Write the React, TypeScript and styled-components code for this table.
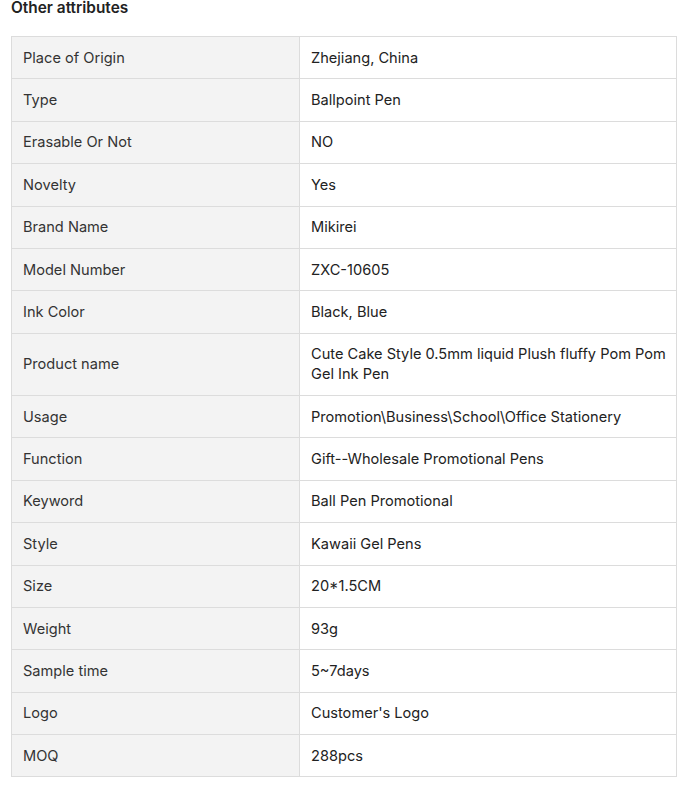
import React from "react";
import styled, { createGlobalStyle } from "styled-components";

const Global = createGlobalStyle`
  html, body { margin: 0; padding: 0; background: #ffffff; }
  body { font-family: Inter, "Noto Sans", Arial, sans-serif; }
`;

const Page = styled.div`
  padding: 0 8px 0 11px;
  width: 666px;
`;

const Title = styled.h2`
  margin: 0;
  font-size: 15.4px;
  line-height: 16px;
  font-weight: 600;
  color: #222222;
`;

const Table = styled.table`
  margin-top: 20px;
  width: 666px;
  border-collapse: collapse;
  table-layout: fixed;
  font-size: 14.6px;
  line-height: 20px;
`;

const Label = styled.th`
  box-sizing: border-box;
  width: 288px;
  background: #f3f3f3;
  border: 1px solid #dcdcdc;
  padding: 10.7px 11px;
  text-align: left;
  font-weight: 400;
  color: #333333;
  vertical-align: middle;
`;

const Value = styled.td`
  border: 1px solid #dcdcdc;
  padding: 10.7px 4px 10.7px 11px;
  color: #222222;
  vertical-align: middle;
`;

const rows: [string, string][] = [
  ["Place of Origin", "Zhejiang, China"],
  ["Type", "Ballpoint Pen"],
  ["Erasable Or Not", "NO"],
  ["Novelty", "Yes"],
  ["Brand Name", "Mikirei"],
  ["Model Number", "ZXC-10605"],
  ["Ink Color", "Black, Blue"],
  ["Product name", "Cute Cake Style 0.5mm liquid Plush fluffy Pom Pom Gel Ink Pen"],
  ["Usage", "Promotion\\Business\\School\\Office Stationery"],
  ["Function", "Gift--Wholesale Promotional Pens"],
  ["Keyword", "Ball Pen Promotional"],
  ["Style", "Kawaii Gel Pens"],
  ["Size", "20*1.5CM"],
  ["Weight", "93g"],
  ["Sample time", "5~7days"],
  ["Logo", "Customer's Logo"],
  ["MOQ", "288pcs"],
];

export default function App() {
  return (
    <>
      <Global />
      <Page>
        <Title>Other attributes</Title>
        <Table>
          <tbody>
            {rows.map(([k, v]) => (
              <tr key={k}>
                <Label>{k}</Label>
                <Value>{v}</Value>
              </tr>
            ))}
          </tbody>
        </Table>
      </Page>
    </>
  );
}
